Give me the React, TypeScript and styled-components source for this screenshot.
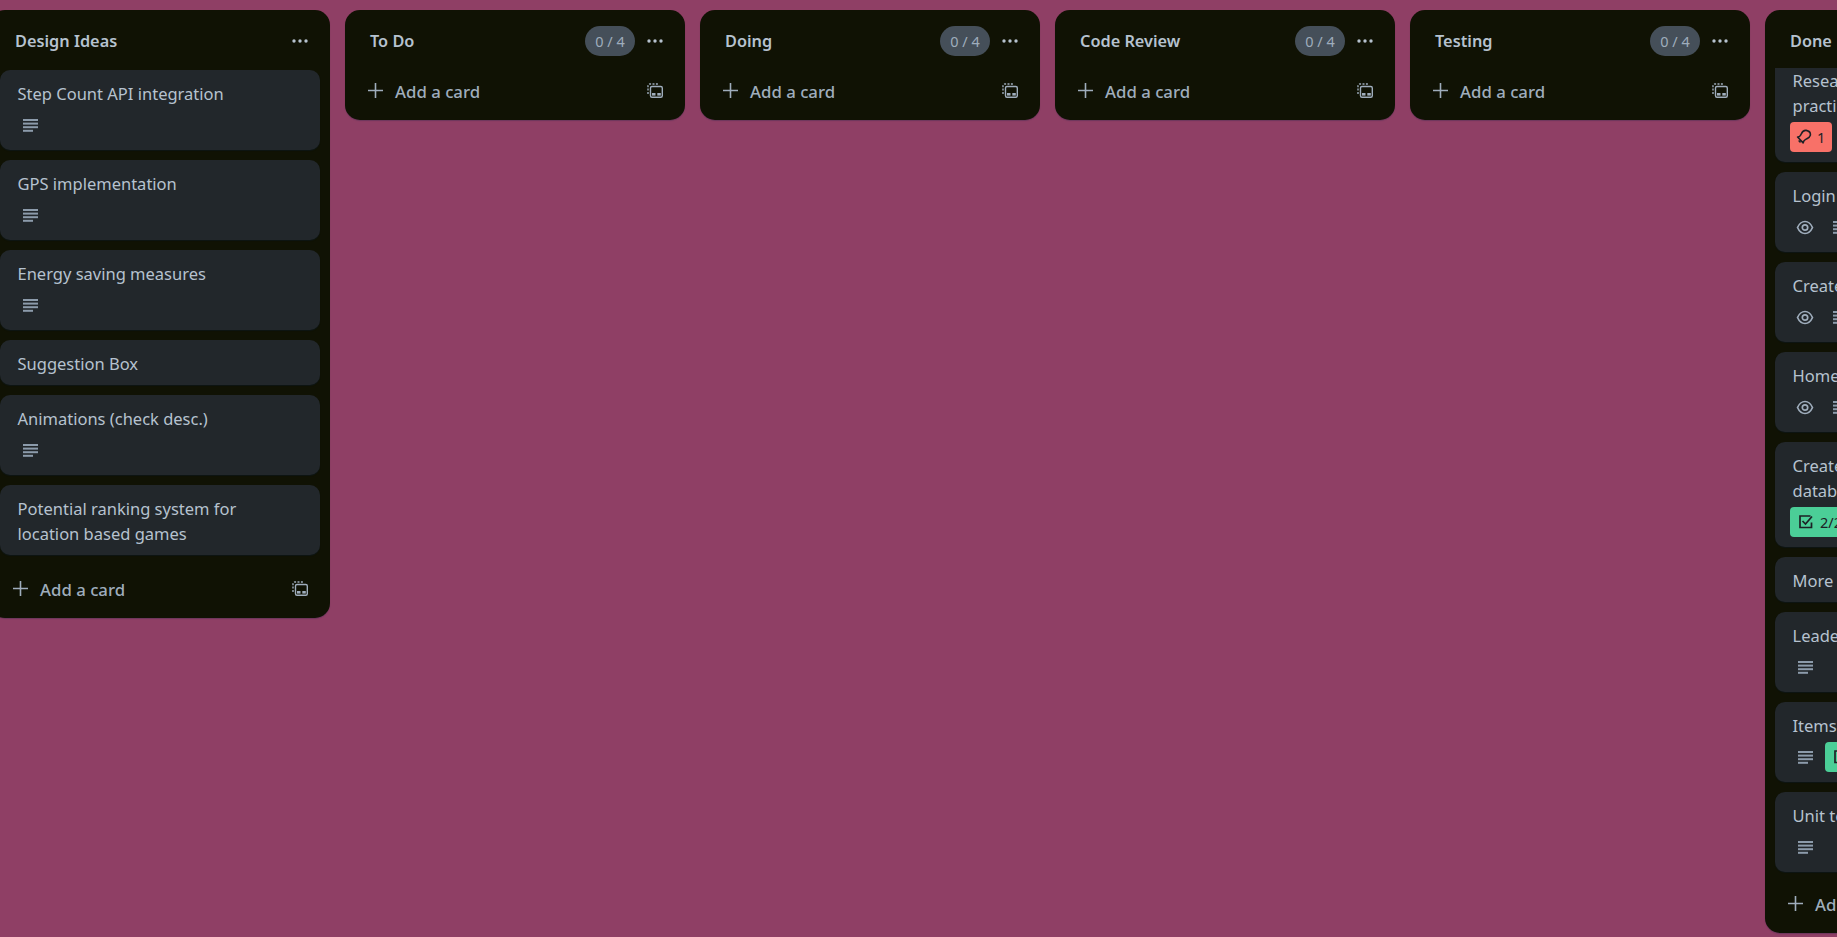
import React from "react";
import styled, { createGlobalStyle } from "styled-components";

const GlobalStyle = createGlobalStyle`
  html, body {
    margin: 0;
    padding: 0;
    height: 100%;
    overflow: hidden;
  }
  body {
    background-color: #8f3f65;
    font-family: "Noto Sans", "Open Sans", sans-serif;
  }
`;

const DescIcon = () => (
  <svg width="15" height="13" viewBox="0 0 15 13" fill="#8c9bab">
    <rect x="0" y="0" width="15" height="2" />
    <rect x="0" y="3.6" width="15" height="2" />
    <rect x="0" y="7.2" width="15" height="2" />
    <rect x="0" y="10.8" width="10" height="2" />
  </svg>
);

const EyeIcon = () => (
  <svg width="18" height="15" viewBox="0 0 18 15" fill="none" stroke="#9fadbc" strokeWidth="1.7">
    <path d="M1.500 7.500C3.200 3.700 5.700 1.500 9 1.500s5.800 2.200 7.500 6c-1.700 3.800-4.200 6-7.500 6s-5.800-2.200-7.500-6z" />
    <circle cx="9" cy="7.500" r="2.700" />
  </svg>
);

const PlusIcon = () => (
  <svg width="15" height="15" viewBox="0 0 15 15" stroke="#9fadbc" strokeWidth="1.6">
    <path d="M7.500 0v15M0 7.500h15" />
  </svg>
);

const DotsIcon = () => (
  <svg width="16" height="4" viewBox="0 0 16 4" fill="#b6c2cf">
    <circle cx="2" cy="2" r="1.700" />
    <circle cx="8" cy="2" r="1.700" />
    <circle cx="14" cy="2" r="1.700" />
  </svg>
);

const TemplateIcon = () => (
  <svg width="16" height="15" viewBox="0 0 16 15" fill="none" stroke="#9fadbc" strokeWidth="1.400">
    <path d="M1 11V3C1 1.800 1.800 1 3 1H12" strokeDasharray="2 1.400" />
    <rect x="3.500" y="3.500" width="11.800" height="10.700" rx="1.500" />
    <rect x="5" y="10" width="3.500" height="2.600" fill="#9fadbc" stroke="none" />
    <rect x="10.300" y="10" width="3.500" height="2.600" fill="#9fadbc" stroke="none" />
  </svg>
);

const BellIcon = () => (
  <svg width="16" height="16" viewBox="0 0 15 15" fill="none" stroke="#1d2125" strokeWidth="1.500">
    <path d="M1.500 7.500c2 .2 2.700-1.200 3.400-2.800C5.800 2.700 7.300.9 9.600 1.300c2.700.5 4.200 2.500 3.800 4.700-.3 1.800-2.200 2.600-4 3.500-1.400.7-2.400 1.700-2.700 3.500z" strokeLinejoin="round" />
    <path d="M2.500 10.800l1.800 1.800" />
  </svg>
);

const CheckIcon = () => (
  <svg width="14" height="14" viewBox="0 0 14 14" fill="none" stroke="#1d2125" strokeWidth="1.700">
    <path d="M12.500 7.500v5h-11.500v-11.500h10.500" />
    <path d="M3.500 6l3 3 6.500-7.500" />
  </svg>
);

const Board = styled.div`
  display: flex;
  align-items: flex-start;
  gap: 15px;
  height: 100vh;
  box-sizing: border-box;
  padding: 10px 0 4px;
  margin-left: -10px;
  width: max-content;
`;

const Column = styled.section`
  width: 340px;
  max-height: 923px;
  display: flex;
  flex-direction: column;
  flex-shrink: 0;
  background-color: #101204;
  border-radius: 15px;
  box-shadow: 0 1px 1px #091e4240;
  color: #b6c2cf;
  overflow: hidden;
`;

const ColumnHeader = styled.header`
  height: 58px;
  flex-shrink: 0;
  box-sizing: border-box;
  display: flex;
  align-items: center;
  justify-content: space-between;
  padding: 3px 22px 0 25px;
`;

const ColumnTitle = styled.h2`
  margin: 0;
  font-size: 16.300px;
  font-weight: 600;
  line-height: 24px;
  color: #b6c2cf;
`;

const HeaderRight = styled.div`
  display: flex;
  align-items: center;
  gap: 12px;
`;

const Limit = styled.span`
  background-color: #454f59;
  color: #9fadbc;
  border-radius: 15px;
  height: 30px;
  width: 50px;
  display: flex;
  align-items: center;
  justify-content: center;
  font-size: 14.500px;
`;

const CardList = styled.div`
  flex: 1 1 auto;
  min-height: 0;
  overflow: hidden;
  padding: 2px 10px 1px;
`;

const Card = styled.article<{ $offset?: number }>`
  background-color: #22272b;
  border-radius: 10px;
  margin-bottom: 10px;
  margin-top: ${(p) => p.$offset ?? 0}px;
  padding: 11px 30px 9px 17.500px;
  box-sizing: border-box;
  min-height: 45px;
  box-shadow: 0 1px 1px #091e4240;
`;

const CardTitle = styled.div`
  font-size: 16.500px;
  line-height: 25px;
  color: #b6c2cf;
`;

const CardMeta = styled.div`
  display: flex;
  align-items: center;
  gap: 10px;
  height: 30px;
  margin: 4px 0 1px;
`;

const MetaIcon = styled.span`
  width: 25px;
  height: 30px;
  display: flex;
  align-items: center;
  justify-content: center;
  flex-shrink: 0;
`;

const Badge = styled.span<{ $bg: string }>`
  height: 30px;
  display: inline-flex;
  align-items: center;
  gap: 5px;
  padding: 0 7px 0 6px;
  border-radius: 4px;
  background-color: ${(p) => p.$bg};
  color: #1d2125;
  font-size: 14.500px;
  margin-left: -2.500px;
`;

const CheckGlyph = styled.span`
  display: flex;
  margin: 0 2px 0 3px;
`;

const ColumnFooter = styled.div`
  flex-shrink: 0;
  display: flex;
  align-items: center;
  justify-content: space-between;
  height: 40px;
  padding: 0 22px 0 23px;
  margin: 2px 0 10px;
`;

const AddCard = styled.div`
  display: flex;
  align-items: center;
  gap: 12px;
  font-size: 16.800px;
  font-weight: 500;
  color: #9fadbc;
`;

const AddLabel = styled.span`
  padding-top: 2px;
`;

type CardData = {
  title: React.ReactNode;
  desc?: boolean;
  watch?: boolean;
  badge?: "pin" | "check";
  checkAfterDesc?: boolean;
};

const designIdeas: CardData[] = [
  { title: "Step Count API integration", desc: true },
  { title: "GPS implementation", desc: true },
  { title: "Energy saving measures", desc: true },
  { title: "Suggestion Box" },
  { title: "Animations (check desc.)", desc: true },
  { title: "Potential ranking system for location based games" },
];

const done: CardData[] = [
  { title: "Research location tracking best practices", badge: "pin" },
  { title: "Login page", watch: true, desc: true },
  { title: "Create account page", watch: true, desc: true },
  { title: "Home page", watch: true, desc: true },
  { title: "Create the leaderboard and items database", badge: "check" },
  { title: "More pages" },
  { title: "Leaderboard", desc: true },
  { title: "Items page", desc: true, checkAfterDesc: true },
  { title: "Unit tests", desc: true },
];

const CheckBadge = ({ label }: { label: string }) => (
  <Badge $bg="#4bce97">
    <CheckGlyph>
      <CheckIcon />
    </CheckGlyph>
    {label}
  </Badge>
);

const TaskCard = ({ card, offset }: { card: CardData; offset?: number }) => {
  const hasMeta = card.desc || card.watch || card.badge;
  return (
    <Card $offset={offset}>
      <CardTitle>{card.title}</CardTitle>
      {hasMeta && (
        <CardMeta>
          {card.badge === "pin" && (
            <Badge $bg="#f87168">
              <BellIcon /> 1
            </Badge>
          )}
          {card.badge === "check" && <CheckBadge label="2/2" />}
          {card.watch && (
            <MetaIcon>
              <EyeIcon />
            </MetaIcon>
          )}
          {card.desc && (
            <MetaIcon>
              <DescIcon />
            </MetaIcon>
          )}
          {card.checkAfterDesc && <CheckBadge label="3/3" />}
        </CardMeta>
      )}
    </Card>
  );
};

const List = ({
  title,
  limit,
  cards = [],
  offset,
}: {
  title: string;
  limit?: boolean;
  cards?: CardData[];
  offset?: number;
}) => (
  <Column>
    <ColumnHeader>
      <ColumnTitle>{title}</ColumnTitle>
      <HeaderRight>
        {limit && <Limit>0 / 4</Limit>}
        <DotsIcon />
      </HeaderRight>
    </ColumnHeader>
    {cards.length > 0 && (
      <CardList>
        {cards.map((card, i) => (
          <TaskCard key={i} card={card} offset={i === 0 ? offset : undefined} />
        ))}
      </CardList>
    )}
    <ColumnFooter>
      <AddCard>
        <PlusIcon />
        <AddLabel>Add a card</AddLabel>
      </AddCard>
      <TemplateIcon />
    </ColumnFooter>
  </Column>
);

export default function App() {
  return (
    <>
      <GlobalStyle />
      <Board>
        <List title="Design Ideas" cards={designIdeas} />
        <List title="To Do" limit />
        <List title="Doing" limit />
        <List title="Code Review" limit />
        <List title="Testing" limit />
        <List title="Done" cards={done} offset={-13} />
      </Board>
    </>
  );
}
